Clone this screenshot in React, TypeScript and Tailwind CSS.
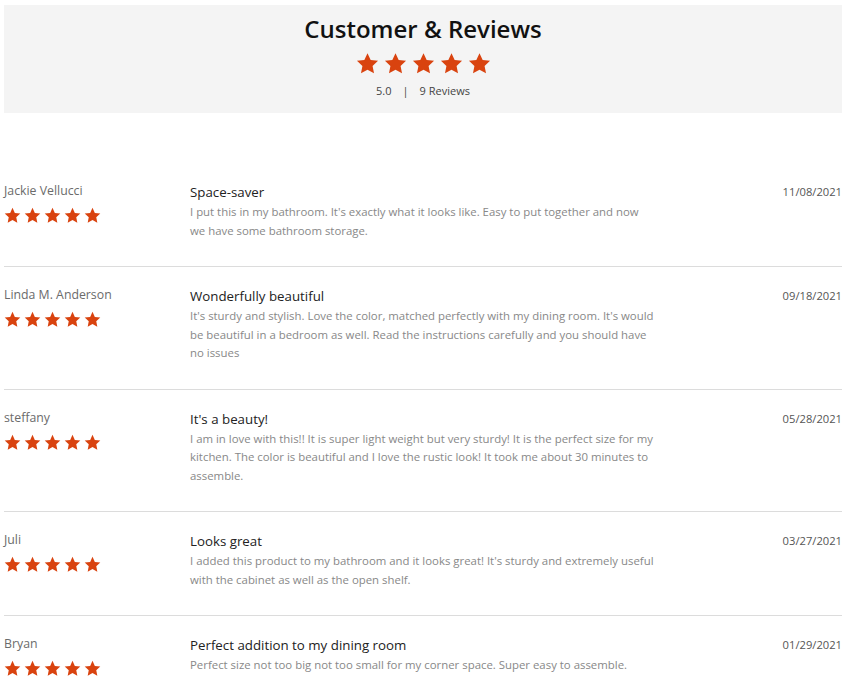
import React from "react";

type Review = {
  name: string;
  title: string;
  lines: string[];
  date: string;
};

const reviews: Review[] = [
  {
    name: "Jackie Vellucci",
    title: "Space-saver",
    lines: [
      "I put this in my bathroom. It's exactly what it looks like. Easy to put together and now",
      "we have some bathroom storage.",
    ],
    date: "11/08/2021",
  },
  {
    name: "Linda M. Anderson",
    title: "Wonderfully beautiful",
    lines: [
      "It's sturdy and stylish. Love the color, matched perfectly with my dining room. It's would",
      "be beautiful in a bedroom as well. Read the instructions carefully and you should have",
      "no issues",
    ],
    date: "09/18/2021",
  },
  {
    name: "steffany",
    title: "It's a beauty!",
    lines: [
      "I am in love with this!! It is super light weight but very sturdy! It is the perfect size for my",
      "kitchen. The color is beautiful and I love the rustic look! It took me about 30 minutes to",
      "assemble.",
    ],
    date: "05/28/2021",
  },
  {
    name: "Juli",
    title: "Looks great",
    lines: [
      "I added this product to my bathroom and it looks great! It's sturdy and extremely useful",
      "with the cabinet as well as the open shelf.",
    ],
    date: "03/27/2021",
  },
  {
    name: "Bryan",
    title: "Perfect addition to my dining room",
    lines: ["Perfect size not too big not too small for my corner space. Super easy to assemble."],
    date: "01/29/2021",
  },
];

const Star: React.FC<{ size: number }> = ({ size }) => (
  <svg width={size} height={size} viewBox="0 0 24 24" className="fill-[#d9430f] shrink-0">
    <path d="M12 1.2l3.3 7.1 7.7.9-5.7 5.3 1.5 7.7L12 18.4l-6.8 3.8 1.5-7.7L1 9.2l7.7-.9L12 1.2z" />
  </svg>
);

const ReviewRow: React.FC<{ review: Review; last: boolean }> = ({ review, last }) => (
  <div className={"flex pt-[20px] pb-[26px] " + (last ? "" : "border-b border-[#dcdcdc]")}>
    <div className="w-[186px] shrink-0 flex flex-col gap-[8px]">
      <div className="text-[12.3px] leading-[16px] text-[#6b6b6b] font-medium">{review.name}</div>
      <div className="flex gap-[3px]">
        {[0, 1, 2, 3, 4].map((i) => (
          <Star key={i} size={17} />
        ))}
      </div>
    </div>
    <div className="flex-1 flex flex-col">
      <div className="text-[13.3px] leading-[18px] text-[#222] font-medium">{review.title}</div>
      <div className="mt-[2px] text-[11.4px] leading-[18.5px] text-[#888]">
        {review.lines.map((l, i) => (
          <div key={i} className="whitespace-nowrap">
            {l}
          </div>
        ))}
      </div>
    </div>
    <div className="text-[11.2px] leading-[18px] text-[#555]">{review.date}</div>
  </div>
);

export default function App() {
  return (
    <div
      className="min-h-screen bg-white pl-[4px] pr-[8px] pt-[5px]"
      style={{ fontFamily: '"Open Sans", "DejaVu Sans", sans-serif' }}
    >
      <div className="bg-[#f4f4f4] h-[108px] flex flex-col items-center pt-[8px]">
        <h1 className="text-[24px] leading-[32px] font-semibold text-[#111]">Customer &amp; Reviews</h1>
        <div className="mt-[7px] flex gap-[5px]">
          {[0, 1, 2, 3, 4].map((i) => (
            <Star key={i} size={23} />
          ))}
        </div>
        <div className="mt-[8px] flex items-center text-[11px] leading-[16px] text-[#444]">
          <span>5.0</span>
          <span className="mx-[11px]">|</span>
          <span>9 Reviews</span>
        </div>
      </div>
      <div className="mt-[50px]">
        {reviews.map((r, i) => (
          <ReviewRow key={r.name} review={r} last={i === reviews.length - 1} />
        ))}
      </div>
    </div>
  );
}
